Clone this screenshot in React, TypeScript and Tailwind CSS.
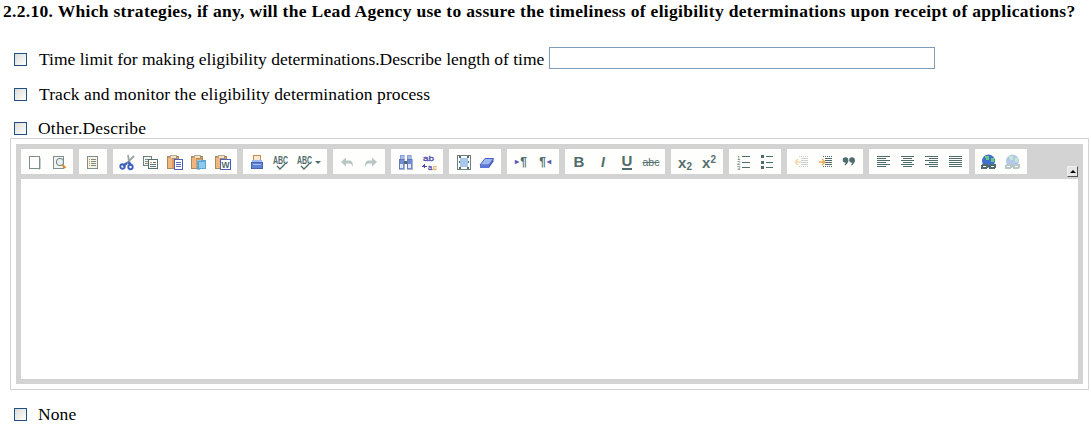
import type { ReactNode } from 'react';

const ink = '#4f6b6b';
const faint = '#b9c7c4';
const sans = 'Liberation Sans, sans-serif';

function Svg({ children }: { children: ReactNode }) {
  return (
    <svg width="16" height="16" viewBox="0 0 16 16" shapeRendering="crispEdges" overflow="visible">
      {children}
    </svg>
  );
}

const NewPage = () => (
  <Svg>
    <rect x="2.5" y="2.5" width="10" height="12" fill="#fff" stroke="#7f8f8f" />
    <path d="M12 15h1M13 4v11" stroke="#c5cdcd" />
  </Svg>
);

const Preview = () => (
  <Svg>
    <rect x="2.5" y="2.5" width="10" height="12" fill="#f4f4f0" stroke="#7f8f8f" />
    <circle cx="9" cy="8" r="3.7" fill="#e6eef0" stroke="#6f8080" shapeRendering="auto" />
    <path d="M11.500 11l3 3" stroke="#e08a2c" strokeWidth="2" shapeRendering="auto" />
  </Svg>
);

const Templates = () => (
  <Svg>
    <rect x="2.5" y="2.5" width="10" height="12" fill="#f5f3e6" stroke="#7f8f8f" />
    <path d="M4 5h1M4 7h1M4 9h1M4 11h1" stroke="#e2913a" />
    <path d="M6 5h5M6 7h5M6 9h5M6 11h5" stroke="#7d8a8a" />
  </Svg>
);

const Cut = () => (
  <Svg>
    <path d="M15 2L7 10M9 1l1 6 2 4" stroke="#9aa5a5" strokeWidth="1.8" fill="none" shapeRendering="auto" />
    <path d="M4 12l4-3M12 11l-3-3" stroke="#3f5fc0" strokeWidth="2.2" fill="none" shapeRendering="auto" />
    <circle cx="3.5" cy="12.5" r="2.2" fill="none" stroke="#3f5fc0" strokeWidth="1.9" shapeRendering="auto" />
    <circle cx="11.500" cy="13" r="2.2" fill="none" stroke="#3f5fc0" strokeWidth="1.9" shapeRendering="auto" />
  </Svg>
);

const Copy = () => (
  <Svg>
    <rect x="0.5" y="2.5" width="8" height="9" fill="#f4f5ef" stroke="#6f8080" />
    <path d="M2 5h5M2 7h3M2 9h3" stroke="#7d8a8a" />
    <rect x="5.5" y="5.5" width="9" height="9" fill="#fff" stroke="#56716f" />
    <path d="M7 8h2" stroke="#e2913a" />
    <path d="M10 8h3M7 10h6M7 12h6" stroke="#5d7472" />
  </Svg>
);

const Clip = () => (
  <>
    <rect x="0.5" y="2.5" width="11" height="12" fill="#dd9a58" stroke="#a98a62" />
    <rect x="3" y="1" width="6" height="3" fill="#efe2c8" stroke="#8a8a78" strokeWidth="0.6" />
    <rect x="1" y="4" width="4" height="10" fill="#f0b880" />
  </>
);

const Paste = () => (
  <Svg>
    <Clip />
    <rect x="7.5" y="5.5" width="8" height="10" fill="#fff" stroke="#4a5fc0" />
    <path d="M9 8h5M9 10h5M9 12h5" stroke="#5b6bb8" />
  </Svg>
);

const PasteText = () => (
  <Svg>
    <Clip />
    <rect x="6" y="6" width="9" height="9" fill="#5aa8da" />
    <rect x="8" y="8" width="6" height="6" fill="#8ec8ea" />
    <path d="M6 6h4M6 15h3" stroke="#9ac0d8" />
  </Svg>
);

const PasteWord = () => (
  <Svg>
    <Clip />
    <rect x="5.5" y="5.5" width="10" height="10" fill="#fff" stroke="#4a5fc0" />
    <text x="10.5" y="14" textAnchor="middle" fontFamily={sans} fontSize="8.5" fontWeight="700" fill={ink}>
      W
    </text>
  </Svg>
);

const Print = () => (
  <Svg>
    <rect x="4.5" y="1.5" width="7" height="5" fill="#f4e9d8" stroke="#c98d4a" />
    <rect x="3" y="6" width="10" height="3" fill="#9fb8ee" />
    <rect x="2.5" y="8.5" width="11" height="6" fill="#5f83d6" stroke="#4664b4" />
    <rect x="4" y="10" width="8" height="1" fill="#a9c0f2" />
  </Svg>
);

const Spell = () => (
  <Svg>
    <text x="0" y="9.5" fontFamily={sans} fontSize="10" fontWeight="700" fill={ink} textLength="15" lengthAdjust="spacingAndGlyphs">
      ABC
    </text>
    <path d="M4 12l3 3 5-5" stroke={ink} strokeWidth="1.4" fill="none" shapeRendering="auto" />
  </Svg>
);

const Undo = ({ flip }: { flip?: boolean }) => (
  <Svg>
    <g transform={flip ? 'matrix(-1 0 0 1 16 0)' : undefined}>
      <path d="M2 8l5-4.500v3h3c3 0 4 2 4 6.500-1-2.500-2-3.500-4-3.500H7v3z" fill={faint} shapeRendering="auto" />
    </g>
  </Svg>
);

const Find = () => (
  <Svg>
    <rect x="3" y="1" width="4" height="4" fill="#a9bce8" stroke="#6a7fc8" strokeWidth="0.5" />
    <rect x="10" y="1" width="4" height="4" fill="#a9bce8" stroke="#6a7fc8" strokeWidth="0.5" />
    <rect x="2" y="5" width="5" height="10" fill="#6f8ad6" stroke="#55689c" strokeWidth="0.5" />
    <rect x="10" y="5" width="5" height="10" fill="#6f8ad6" stroke="#55689c" strokeWidth="0.5" />
    <rect x="3" y="10" width="3" height="4" fill="#dfe7f8" />
    <rect x="11" y="10" width="3" height="4" fill="#dfe7f8" />
    <rect x="7" y="7" width="3" height="3" fill={ink} />
  </Svg>
);

const Replace = () => (
  <Svg>
    <path d="M1 12h5M3 10v4M2 11v2" stroke="#4f4caa" />
    <text x="2" y="6.5" fontFamily={sans} fontSize="8" fill="#4f4caa" stroke="#4f4caa" strokeWidth="0.3" textLength="11" lengthAdjust="spacingAndGlyphs">
      ab
    </text>
    <text x="7" y="15.5" fontFamily={sans} fontSize="7.5" fill="#4f4caa" stroke="#4f4caa" strokeWidth="0.3">
      a
    </text>
    <text x="12" y="15.5" fontFamily={sans} fontSize="7.5" fill="#eaa13c" stroke="#eaa13c" strokeWidth="0.3">
      c
    </text>
  </Svg>
);

const SelectAll = () => (
  <Svg>
    <rect x="2.5" y="1.5" width="13" height="14" fill="#fff" stroke="#6f8080" />
    <rect x="5" y="4" width="8" height="9" fill="#a9c6ee" />
    <path d="M4 3h2M12 3h2M4 14h2M12 14h2M4 8h1M13 8h1" stroke={ink} strokeWidth="1.4" />
  </Svg>
);

const Eraser = () => (
  <Svg>
    <path d="M1 11l5-6.500h8.500L10 11z" fill="#9cb6f0" stroke="#4a5fc0" shapeRendering="auto" />
    <path d="M1 11h9v3H1z" fill="#5a76d8" shapeRendering="auto" />
    <path d="M10 11l4.500-6.500v3L10 14z" fill="#4a5fc0" shapeRendering="auto" />
  </Svg>
);

const Mark = ({ left }: { left?: boolean }) => (
  <span className="flex w-4 items-center justify-center gap-px font-['Liberation_Sans',sans-serif] text-[12px] font-bold leading-none text-[#4f6b6b]">
    {left ? <span>¶</span> : <span className="text-[8px] text-[#5a57ad]">▸</span>}
    {left ? <span className="text-[8px] text-[#5a57ad]">◂</span> : <span>¶</span>}
  </span>
);

const Sized = ({ base, sup, sub }: { base: string; sup?: string; sub?: string }) => (
  <span className="flex items-baseline font-['Liberation_Sans',sans-serif] text-[15px] font-bold leading-none text-[#56706f]">
    {base}
    {sub && <span className="relative top-[2px] text-[10px]">{sub}</span>}
    {sup && <span className="relative top-[-5px] text-[10px]">{sup}</span>}
  </span>
);

const NumList = () => (
  <Svg>
    <path d="M7 2h8M7 8h8M7 13h8" stroke={ink} />
    <text x="2" y="6" fontFamily={sans} fontSize="6" fill={ink}>1</text>
    <text x="2" y="11" fontFamily={sans} fontSize="6" fill={ink}>2</text>
    <text x="2" y="16" fontFamily={sans} fontSize="6" fill={ink}>3</text>
  </Svg>
);

const BulList = () => (
  <Svg>
    <path d="M2 1h3v3H2zM2 7h3v3H2zM2 12h3v3H2z" fill={ink} />
    <path d="M7 2h7M7 8h7M7 13h7" stroke={ink} />
  </Svg>
);

const Indent = ({ out }: { out?: boolean }) => {
  const line = out ? '#c8d2cf' : ink;
  const arrow = out ? '#f8d8a8' : '#f2a94a';
  return (
    <Svg>
      <path d="M8 4h7M8 6h7M8 8h7M8 10h7" stroke={line} />
      <path d="M6 2h9M6 12h9" stroke={line} strokeDasharray="1 1" />
      <path d={out ? 'M2 8h6M2 8l3-3M2 8l3 3' : 'M2 8h6M8 8l-3-3M8 8l-3 3'} stroke={arrow} strokeWidth="1.4" fill="none" shapeRendering="auto" />
    </Svg>
  );
};

const Quote = () => (
  <Svg>
    <g fill={ink} shapeRendering="auto">
      <circle cx="4.500" cy="6" r="2.800" />
      <circle cx="11" cy="6" r="2.800" />
      <path d="M5 6h2.300c0 2.500-1.300 4.500-3.300 5.500l-.5-.7C4.500 10 5 8.500 5 6zM11.500 6h2.300c0 2.500-1.300 4.500-3.300 5.500l-.5-.7C11 10 11.500 8.500 11.500 6z" />
    </g>
  </Svg>
);

const Align = ({ d }: { d: string }) => (
  <Svg>
    <path d={d} stroke={ink} />
  </Svg>
);

const Globe = ({ off }: { off?: boolean }) => (
  <Svg>
    <circle cx="7.500" cy="7" r="6.500" fill={off ? '#b4c8ec' : '#3f6fd0'} shapeRendering="auto" />
    <path d="M4 2h4v4H5zM10 4h3v4h-3z" fill={off ? '#c4e8cc' : '#66cc77'} />
    <rect x="1" y="11" width="5" height="3" rx="1" fill="#fff" stroke={off ? faint : ink} strokeWidth="2" />
    <rect x="9" y="11" width="5" height="3" rx="1" fill="#fff" stroke={off ? faint : ink} strokeWidth="2" />
    <rect x="6" y="11" width="3" height="2" fill={off ? faint : ink} />
  </Svg>
);

function Btn({ children, wide }: { children: ReactNode; wide?: boolean }) {
  return (
    <span className={`flex h-[25px] items-center justify-center pt-px ${wide ? 'w-[32px]' : 'w-6'}`}>{children}</span>
  );
}

function Group({ children }: { children: ReactNode }) {
  return <div className="flex h-[25px] bg-[#fefefc] px-0.5">{children}</div>;
}

function Option({ label, className, textClass, children }: { label: string; className: string; textClass: string; children?: ReactNode }) {
  return (
    <div className={`flex items-center ${className}`}>
      <span className="ml-[14px] h-[13px] w-[13px] shrink-0 border border-[#1c5180] bg-gradient-to-br from-[#dcdcd7] to-white" />
      <span className={textClass}>{label}</span>
      {children}
    </div>
  );
}

export default function App() {
  return (
    <div className="h-[436px] w-[1091px] overflow-hidden bg-white font-['Liberation_Serif',serif] text-[17.5px] leading-[18px] text-black">
      <div className="whitespace-nowrap pl-[3px] pt-[2px] text-[17.5px] font-bold tracking-[0.31px]">
        2.2.10. Which strategies, if any, will the Lead Agency use to assure the timeliness of eligibility determinations upon receipt of applications?
      </div>

      <Option
        label="Time limit for making eligibility determinations.Describe length of time"
        className="mt-[27px] h-[25px]"
        textClass="mb-[2px] ml-3"
      >
        <input type="text" className="ml-[5px] h-[22px] w-[386px] self-start border border-[#7f9db9] bg-white" readOnly />
      </Option>
      <Option label="Track and monitor the eligibility determination process" className="mt-[13px] h-[18px]" textClass="ml-3 tracking-[0.09px]" />
      <Option label="Other.Describe" className="mt-[16px] h-[19px]" textClass="mb-[2px] ml-[11px] tracking-[0.2px]" />

      <div className="ml-[10px] w-[1079px] border border-[#d3d3d3] p-[5px]">
        <div className="bg-[#d3d3d3] p-[5px]">
          <div className="flex gap-1.5 pb-[5px]">
            <Group>
              <Btn><NewPage /></Btn>
              <Btn><Preview /></Btn>
            </Group>
            <Group>
              <Btn><Templates /></Btn>
            </Group>
            <Group>
              <Btn><Cut /></Btn>
              <Btn><Copy /></Btn>
              <Btn><Paste /></Btn>
              <Btn><PasteText /></Btn>
              <Btn><PasteWord /></Btn>
            </Group>
            <Group>
              <Btn><Print /></Btn>
              <Btn><Spell /></Btn>
              <Btn wide>
                <Spell />
                <span className="ml-[2px] h-0 w-0 border-x-[3px] border-t-[3px] border-x-transparent border-t-[#4f6b6b]" />
              </Btn>
            </Group>
            <Group>
              <Btn><Undo /></Btn>
              <Btn><Undo flip /></Btn>
            </Group>
            <Group>
              <Btn><Find /></Btn>
              <Btn><Replace /></Btn>
            </Group>
            <Group>
              <Btn><SelectAll /></Btn>
              <Btn><Eraser /></Btn>
            </Group>
            <Group>
              <Btn><Mark /></Btn>
              <Btn><Mark left /></Btn>
            </Group>
            <Group>
              <Btn><span className="font-['Liberation_Sans',sans-serif] text-[15px] font-bold text-[#4f6b6b]">B</span></Btn>
              <Btn><span className="font-['Liberation_Sans',sans-serif] text-[14px] font-bold italic text-[#4f6b6b]">I</span></Btn>
              <Btn><span className="border-b-2 border-[#4f6b6b] font-['Liberation_Sans',sans-serif] text-[15px] font-bold leading-[14px] text-[#4f6b6b]">U</span></Btn>
              <Btn><span className="font-['Liberation_Sans',sans-serif] text-[10.5px] text-[#56706f] line-through">abc</span></Btn>
            </Group>
            <Group>
              <Btn><Sized base="x" sub="2" /></Btn>
              <Btn><Sized base="x" sup="2" /></Btn>
            </Group>
            <Group>
              <Btn><NumList /></Btn>
              <Btn><BulList /></Btn>
            </Group>
            <Group>
              <Btn><Indent out /></Btn>
              <Btn><Indent /></Btn>
              <Btn><Quote /></Btn>
            </Group>
            <Group>
              <Btn><Align d="M2 2h13M2 4h9M2 6h13M2 8h9M2 10h13M2 12h9" /></Btn>
              <Btn><Align d="M2 2h13M4 4h9M2 6h13M4 8h9M2 10h13M4 12h9" /></Btn>
              <Btn><Align d="M2 2h13M6 4h9M2 6h13M6 8h9M2 10h13M6 12h9" /></Btn>
              <Btn><Align d="M2 2h13M2 4h13M2 6h13M2 8h13M2 10h13M2 12h13" /></Btn>
            </Group>
            <Group>
              <Btn><Globe /></Btn>
              <Btn><Globe off /></Btn>
            </Group>
            <button className="mb-[-3px] ml-auto flex h-[11px] w-[11px] items-center justify-center self-end border border-b-[#555] border-l-[#eee] border-r-[#555] border-t-[#eee] bg-[#e6e6e6]">
              <span className="h-0 w-0 border-x-[3px] border-b-[3px] border-x-transparent border-b-black" />
            </button>
          </div>
          <div className="h-[200px] bg-white" />
        </div>
      </div>

      <Option label="None" className="mt-[15px] h-[19px]" textClass="mb-[2px] ml-[11px] tracking-[0.1px]" />
    </div>
  );
}
